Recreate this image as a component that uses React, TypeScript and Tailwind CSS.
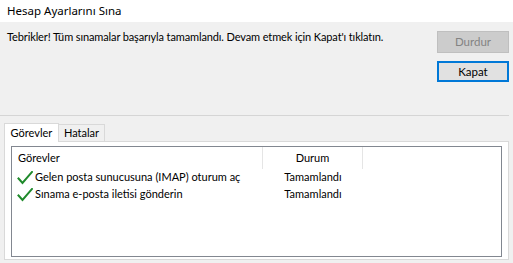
import React from "react";

const rows = [
  { task: "Gelen posta sunucusuna (IMAP) oturum aç", status: "Tamamlandı" },
  { task: "Sınama e-posta iletisi gönderin", status: "Tamamlandı" },
];

function Check() {
  return (
    <svg width="16" height="14" viewBox="0 0 16 14" className="shrink-0">
      <path
        d="M1.5 7.5 L5.5 12 L15 1"
        fill="none"
        stroke="#1f8a2b"
        strokeWidth="2"
        strokeLinecap="square"
      />
    </svg>
  );
}

export default function App() {
  return (
    <div
      className="w-[513px] h-[263px] bg-[#f0f0f0] text-[11px] text-black overflow-hidden"
      style={{ fontFamily: "Lato, 'Noto Sans', sans-serif" }}
    >
      {/* Title */}
      <div
        className="h-[22px] bg-white flex items-center px-[7px] text-[11.5px]"
        style={{ fontFamily: "'Noto Sans', sans-serif" }}
      >
        Hesap Ayarlarını Sına
      </div>

      {/* Message + buttons */}
      <div className="h-[93px] flex justify-between">
        <div className="pl-[7px] pt-[7px] leading-[16px] tracking-[-0.12px]">
          Tebrikler! Tüm sınamalar başarıyla tamamlandı. Devam etmek için Kapat'ı tıklatın.
        </div>
        <div className="flex flex-col gap-[8px] pt-[9px] pr-[4px]">
          <button className="w-[72px] h-[22px] bg-[#cccccc] border border-[#bfbfbf] text-[#838383] leading-none text-[11.5px]">
            Durdur
          </button>
          <button className="w-[72px] h-[21px] bg-[#e1e1e1] border-2 border-[#0078d7] leading-none text-[11.5px]">
            Kapat
          </button>
        </div>
      </div>

      <div className="h-px bg-[#d5d5d5] mr-[4px]" />

      {/* Tabs */}
      <div className="px-[4px] pt-[6px]">
        <div className="flex items-end h-[19px]">
          <div className="w-[55px] h-[19px] bg-white border border-b-0 border-[#d9d9d9] flex items-center justify-center relative z-10 -mb-px">
            Görevler
          </div>
          <div className="w-[46px] h-[17px] bg-[#f0f0f0] border border-l-0 border-b-0 border-[#d9d9d9] flex items-center justify-center">
            Hatalar
          </div>
        </div>
        <div className="h-[119px] bg-white border border-[#d9d9d9] px-[6px] pt-[4px] pb-[2px]">
          <div className="h-full border border-[#828790] bg-white">
            <div className="flex h-[22px] items-center">
              <div className="w-[251px] h-full pl-[6px] flex items-center border-r border-[#e5e5e5]">
                Görevler
              </div>
              <div className="w-[100px] h-full flex items-center justify-center border-r border-[#e5e5e5]">
                Durum
              </div>
            </div>
            {rows.map((r) => (
              <div key={r.task} className="flex h-[17px] items-center">
                <div className="w-[251px] pl-[5px] flex items-center gap-[2px]">
                  <Check />
                  <span>{r.task}</span>
                </div>
                <div className="w-[100px] text-center">{r.status}</div>
              </div>
            ))}
          </div>
        </div>
      </div>
    </div>
  );
}
